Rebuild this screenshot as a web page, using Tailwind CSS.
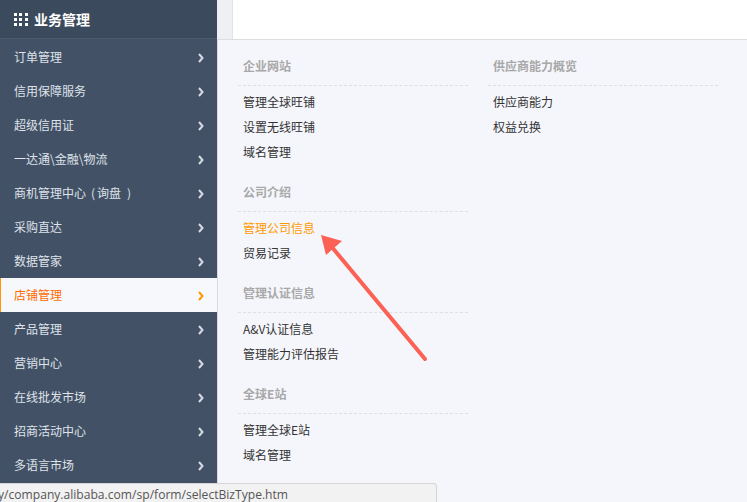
<!DOCTYPE html>
<html lang="zh-CN">
<head>
  <meta charset="UTF-8" />
  <title>业务管理</title>
  <script src="https://cdn.jsdelivr.net/npm/@tailwindcss/browser@4"></script>
</head>
<body class="bg-white font-['Noto_Sans_CJK_SC','Noto_Sans',sans-serif] text-xs">
  <div class="relative flex w-[747px] h-[502px] overflow-hidden">
    <!-- Sidebar -->
    <aside class="w-[217px] shrink-0 bg-[#435166] text-[#dfe3ea]">
      <div class="flex items-center h-[39px] pl-[14px] gap-[6px] bg-[#3c4a5d] border-b border-[#4c5a70] text-white text-sm font-bold">
        <div class="grid grid-cols-3 gap-[2px] w-[14px]">
          <i class="size-[3px] bg-white"></i><i class="size-[3px] bg-white"></i><i class="size-[3px] bg-white"></i>
          <i class="size-[3px] bg-white"></i><i class="size-[3px] bg-white"></i><i class="size-[3px] bg-white"></i>
          <i class="size-[3px] bg-white"></i><i class="size-[3px] bg-white"></i><i class="size-[3px] bg-white"></i>
        </div>
        业务管理
      </div>
      <ul class="pt-px">
        <li class="flex items-center justify-between h-[34px] pl-[14px] pr-[13px]">订单管理<svg class="mt-[2px]" width="6" height="10" viewBox="0 0 6 10"><path d="M1 1l3.5 4L1 9" fill="none" stroke="#d5dae2" stroke-width="2"/></svg></li>
        <li class="flex items-center justify-between h-[34px] pl-[14px] pr-[13px]">信用保障服务<svg class="mt-[2px]" width="6" height="10" viewBox="0 0 6 10"><path d="M1 1l3.5 4L1 9" fill="none" stroke="#d5dae2" stroke-width="2"/></svg></li>
        <li class="flex items-center justify-between h-[34px] pl-[14px] pr-[13px]">超级信用证<svg class="mt-[2px]" width="6" height="10" viewBox="0 0 6 10"><path d="M1 1l3.5 4L1 9" fill="none" stroke="#d5dae2" stroke-width="2"/></svg></li>
        <li class="flex items-center justify-between h-[34px] pl-[14px] pr-[13px]">一达通\金融\物流<svg class="mt-[2px]" width="6" height="10" viewBox="0 0 6 10"><path d="M1 1l3.5 4L1 9" fill="none" stroke="#d5dae2" stroke-width="2"/></svg></li>
        <li class="flex items-center justify-between h-[34px] pl-[14px] pr-[13px]"><span>商机管理中心<span class="ml-[5px]">(</span><span class="ml-[2px]">询盘</span><span class="ml-[6px]">)</span></span><svg class="mt-[2px]" width="6" height="10" viewBox="0 0 6 10"><path d="M1 1l3.5 4L1 9" fill="none" stroke="#d5dae2" stroke-width="2"/></svg></li>
        <li class="flex items-center justify-between h-[34px] pl-[14px] pr-[13px]">采购直达<svg class="mt-[2px]" width="6" height="10" viewBox="0 0 6 10"><path d="M1 1l3.5 4L1 9" fill="none" stroke="#d5dae2" stroke-width="2"/></svg></li>
        <li class="flex items-center justify-between h-[34px] pl-[14px] pr-[13px]">数据管家<svg class="mt-[2px]" width="6" height="10" viewBox="0 0 6 10"><path d="M1 1l3.5 4L1 9" fill="none" stroke="#d5dae2" stroke-width="2"/></svg></li>
        <li class="flex items-center justify-between h-[34px] pl-[13px] pr-[13px] bg-[#f7f8fc] border-l border-[#ff9900] text-[#ff6a00]">店铺管理<svg class="mt-[2px]" width="6" height="10" viewBox="0 0 6 10"><path d="M1 1l3.5 4L1 9" fill="none" stroke="#ff9900" stroke-width="2"/></svg></li>
        <li class="flex items-center justify-between h-[34px] pl-[14px] pr-[13px]">产品管理<svg class="mt-[2px]" width="6" height="10" viewBox="0 0 6 10"><path d="M1 1l3.5 4L1 9" fill="none" stroke="#d5dae2" stroke-width="2"/></svg></li>
        <li class="flex items-center justify-between h-[34px] pl-[14px] pr-[13px]">营销中心<svg class="mt-[2px]" width="6" height="10" viewBox="0 0 6 10"><path d="M1 1l3.5 4L1 9" fill="none" stroke="#d5dae2" stroke-width="2"/></svg></li>
        <li class="flex items-center justify-between h-[34px] pl-[14px] pr-[13px]">在线批发市场<svg class="mt-[2px]" width="6" height="10" viewBox="0 0 6 10"><path d="M1 1l3.5 4L1 9" fill="none" stroke="#d5dae2" stroke-width="2"/></svg></li>
        <li class="flex items-center justify-between h-[34px] pl-[14px] pr-[13px]">招商活动中心<svg class="mt-[2px]" width="6" height="10" viewBox="0 0 6 10"><path d="M1 1l3.5 4L1 9" fill="none" stroke="#d5dae2" stroke-width="2"/></svg></li>
        <li class="flex items-center justify-between h-[34px] pl-[14px] pr-[13px]">多语言市场<svg class="mt-[2px]" width="6" height="10" viewBox="0 0 6 10"><path d="M1 1l3.5 4L1 9" fill="none" stroke="#d5dae2" stroke-width="2"/></svg></li>
      </ul>
    </aside>

    <!-- Main -->
    <main class="flex-1 flex flex-col">
      <div class="flex h-[40px] shrink-0 border-b border-[#dcdde1]">
        <div class="w-4 bg-[#eff0f4] border-r border-[#e3e4e8]"></div>
        <div class="flex-1 bg-white"></div>
      </div>
      <div class="flex-1 flex gap-5 pl-[20px] pt-[7px] bg-[#f5f6fb] border-l border-[#d8d9de]">
        <div class="w-[230px]">
          <section class="pb-[9px]">
            <h3 class="flex items-center h-[39px] pl-[5px] border-b border-dashed border-[#dddfe4] font-bold text-[#a8a8a8]">企业网站</h3>
            <ul class="pt-[3px] pl-[5px] text-[#333]">
              <li class="h-[25px] leading-[25px]">管理全球旺铺</li>
              <li class="h-[25px] leading-[25px]">设置无线旺铺</li>
              <li class="h-[25px] leading-[25px]">域名管理</li>
            </ul>
          </section>
          <section class="pb-[9px]">
            <h3 class="flex items-center h-[39px] pl-[5px] border-b border-dashed border-[#dddfe4] font-bold text-[#a8a8a8]">公司介绍</h3>
            <ul class="pt-[3px] pl-[5px] text-[#333]">
              <li class="h-[25px] leading-[25px] text-[#ff9900]">管理公司信息</li>
              <li class="h-[25px] leading-[25px]">贸易记录</li>
            </ul>
          </section>
          <section class="pb-[9px]">
            <h3 class="flex items-center h-[39px] pl-[5px] border-b border-dashed border-[#dddfe4] font-bold text-[#a8a8a8]">管理认证信息</h3>
            <ul class="pt-[3px] pl-[5px] text-[#333]">
              <li class="h-[25px] leading-[25px]">A&amp;V认证信息</li>
              <li class="h-[25px] leading-[25px]">管理能力评估报告</li>
            </ul>
          </section>
          <section class="pb-[9px]">
            <h3 class="flex items-center h-[39px] pl-[5px] border-b border-dashed border-[#dddfe4] font-bold text-[#a8a8a8]">全球E站</h3>
            <ul class="pt-[3px] pl-[5px] text-[#333]">
              <li class="h-[25px] leading-[25px]">管理全球E站</li>
              <li class="h-[25px] leading-[25px]">域名管理</li>
            </ul>
          </section>
        </div>
        <div class="w-[230px]">
          <section class="pb-[9px]">
            <h3 class="flex items-center h-[39px] pl-[5px] border-b border-dashed border-[#dddfe4] font-bold text-[#a8a8a8]">供应商能力概览</h3>
            <ul class="pt-[3px] pl-[5px] text-[#333]">
              <li class="h-[25px] leading-[25px]">供应商能力</li>
              <li class="h-[25px] leading-[25px]">权益兑换</li>
            </ul>
          </section>
        </div>
      </div>
    </main>

    <!-- Annotation arrow -->
    <svg class="absolute left-0 top-0 pointer-events-none" width="747" height="502" viewBox="0 0 747 502">
      <path d="M425 359L331 246" fill="none" stroke="#fb6155" stroke-width="4" stroke-linecap="round"/>
      <path d="M321 235L342 241L326 255Z" fill="#fb6155"/>
    </svg>

    <!-- Link status bubble -->
    <div class="absolute left-0 bottom-0 w-[437px] h-[19px] overflow-hidden bg-[#f2f2f2] border-t border-r border-[#d5d5d7] rounded-tr-[4px] font-['Open_Sans',sans-serif] text-[12.1px] leading-[21px] text-[#555] whitespace-nowrap">
      <span class="block -ml-[2px]">y/company.alibaba.com/sp/form/selectBizType.htm</span>
    </div>
  </div>
</body>
</html>
